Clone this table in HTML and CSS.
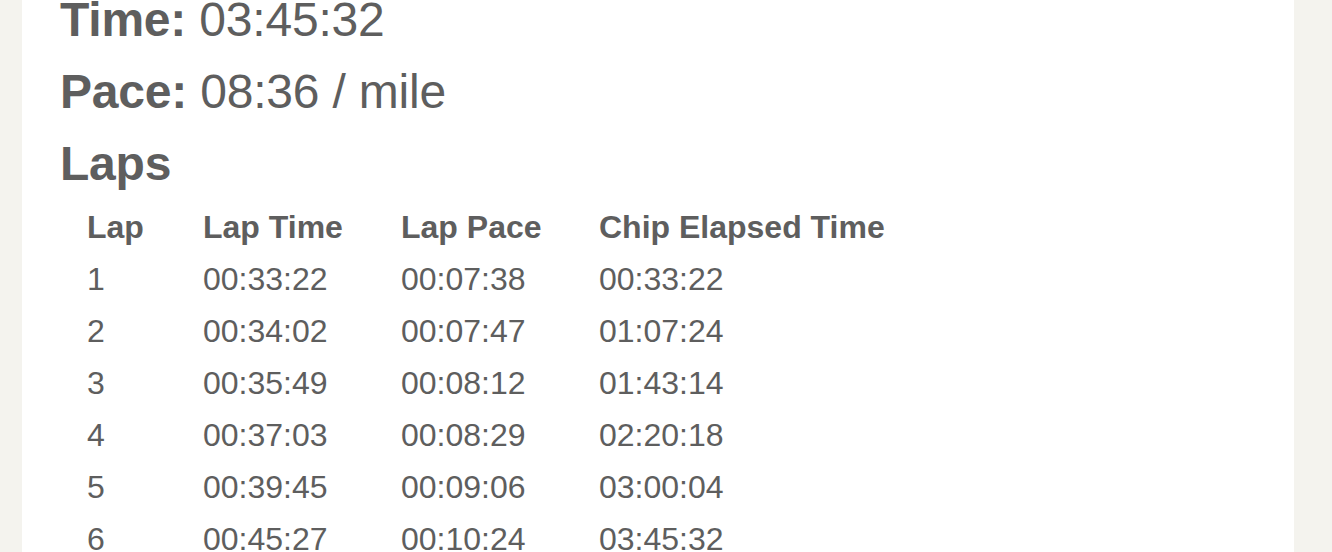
FILE: index.html
```html
<!DOCTYPE html>
<html lang="en">
<head>
<meta charset="utf-8">
<title>Race Result</title>
<link rel="stylesheet" href="styles.css">
</head>
<body>
<main class="card">
  <p class="stat"><strong>Time:</strong> 03:45:32</p>
  <p class="stat"><strong>Pace:</strong> 08:36 / mile</p>
  <h3 class="section-title">Laps</h3>
  <table class="laps">
    <thead>
      <tr>
        <th class="c-lap">Lap</th>
        <th class="c-time">Lap Time</th>
        <th class="c-pace">Lap Pace</th>
        <th class="c-chip">Chip Elapsed Time</th>
      </tr>
    </thead>
    <tbody>
      <tr><td>1</td><td>00:33:22</td><td>00:07:38</td><td>00:33:22</td></tr>
      <tr><td>2</td><td>00:34:02</td><td>00:07:47</td><td>01:07:24</td></tr>
      <tr><td>3</td><td>00:35:49</td><td>00:08:12</td><td>01:43:14</td></tr>
      <tr><td>4</td><td>00:37:03</td><td>00:08:29</td><td>02:20:18</td></tr>
      <tr><td>5</td><td>00:39:45</td><td>00:09:06</td><td>03:00:04</td></tr>
      <tr><td>6</td><td>00:45:27</td><td>00:10:24</td><td>03:45:32</td></tr>
    </tbody>
  </table>
</main>
</body>
</html>
```

FILE: styles.css
```css
html, body {
  margin: 0;
  padding: 0;
  background: #f4f3ee;
  font-family: "Liberation Sans", Arial, Helvetica, sans-serif;
  color: #5e5e5e;
  overflow: hidden;
}

.card {
  background: #ffffff;
  margin: -16px 0 0 22px;
  width: 1272px;
  min-height: 700px;
  padding: 0 0 40px 38px;
  box-sizing: border-box;
}

.stat,
.section-title {
  margin: 0;
  font-size: 48px;
  line-height: 72px;
  font-weight: 400;
  letter-spacing: -0.2px;
}

.stat strong,
.section-title {
  font-weight: 700;
}

.laps {
  margin-top: 1px;
  border-collapse: collapse;
  font-size: 32px;
  line-height: 38px;
}

.laps th,
.laps td {
  padding: 7px 0 7px 27px;
  text-align: left;
  vertical-align: top;
  white-space: nowrap;
}

.laps th {
  font-weight: 700;
}

.c-lap { width: 89px; }
.c-time { width: 171px; }
.c-pace { width: 171px; }
```
